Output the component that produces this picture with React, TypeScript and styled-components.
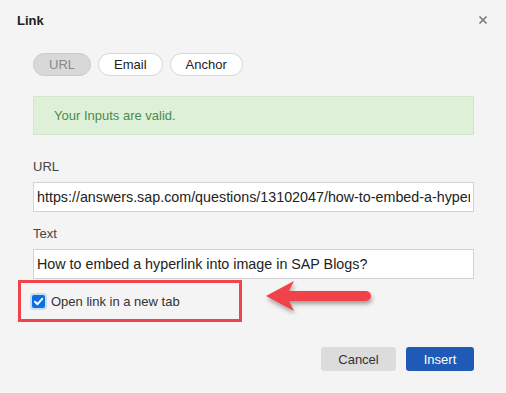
import styled, { createGlobalStyle } from 'styled-components';

const GlobalStyle = createGlobalStyle`
    body {
        margin: 0;
        background: #f4f4f4;
        font-family: "Liberation Sans", Arial, sans-serif;
    }
`

const tabs = ["URL", "Email", "Anchor"];

const LinkDialog = () => {
    return (
        <StyledDialog>
            <GlobalStyle />
            <Header>
                <Title>Link</Title>
                <Close width="10" height="10" viewBox="0 0 10 10">
                    <path d="M1.5 1.5 L8.5 8.5 M8.5 1.5 L1.5 8.5" stroke="#777" strokeWidth="1.6" />
                </Close>
            </Header>
            <Body>
                <Tabs>
                    {tabs.map((tab, i) => (
                        <Tab key={tab} $active={i === 0}>{tab}</Tab>
                    ))}
                </Tabs>
                <Alert>Your Inputs are valid.</Alert>
                <Label>URL</Label>
                <Field value="https://answers.sap.com/questions/13102047/how-to-embed-a-hyperlink-into-image-in-sap-blogs.html" readOnly />
                <Label $second>Text</Label>
                <Field value="How to embed a hyperlink into image in SAP Blogs?" readOnly />
                <CheckRow>
                    <Highlight>
                        <CheckBox>
                            <svg width="13" height="13" viewBox="0 0 13 13">
                                <path d="M3 6.8 L5.5 9.2 L10.2 3.8" fill="none" stroke="#fff" strokeWidth="2" strokeLinecap="round" strokeLinejoin="round" />
                            </svg>
                        </CheckBox>
                        <CheckLabel>Open link in a new tab</CheckLabel>
                    </Highlight>
                    <Arrow width="112" height="36" viewBox="0 0 112 36">
                        <defs>
                            <filter id="shadow" x="-10%" y="-30%" width="130%" height="170%">
                                <feDropShadow dx="1" dy="3" stdDeviation="2" floodColor="#000" floodOpacity="0.35" />
                            </filter>
                        </defs>
                        <path
                            d="M2 17 L30 2 L25 12 L102 12 A5 5 0 0 1 102 22 L25 22 L30 32 Z"
                            fill="#f2424a"
                            filter="url(#shadow)"
                        />
                    </Arrow>
                </CheckRow>
                <Footer>
                    <Button>Cancel</Button>
                    <Button $primary>Insert</Button>
                </Footer>
            </Body>
        </StyledDialog>
    );
};

const StyledDialog = styled.div`
    width: 506px;
    height: 393px;
    box-sizing: border-box;
    background: #f4f4f4;
    color: #333;
`
const Header = styled.div`
    display: flex;
    align-items: center;
    justify-content: space-between;
    height: 40px;
    padding: 0 17px 0 17px;
`
const Title = styled.div`
    font-size: 13px;
    font-weight: bold;
    color: #222;
`
const Close = styled.svg`
    margin-right: 1px;
`
const Body = styled.div`
    padding: 13px 32px 0 33px;
`
const Tabs = styled.div`
    display: flex;
    gap: 7px;
`
const Tab = styled.div<{ $active?: boolean }>`
    height: 23px;
    box-sizing: border-box;
    padding: 0 15px;
    display: flex;
    align-items: center;
    border-radius: 12px;
    font-size: 13px;
    border: 1px solid ${p => p.$active ? '#c9c9c9' : '#d6d6d6'};
    background: ${p => p.$active ? '#d8d8d8' : '#fff'};
    color: ${p => p.$active ? '#8a8a8a' : '#222'};
`
const Alert = styled.div`
    margin-top: 20px;
    height: 39px;
    box-sizing: border-box;
    padding: 0 20px;
    display: flex;
    align-items: center;
    background: #dff0d8;
    border: 1px solid #d0e8c6;
    color: #4b8b4b;
    font-size: 13px;
`
const Label = styled.div<{ $second?: boolean }>`
    font-size: 13px;
    color: #444;
    margin: ${p => p.$second ? 14 : 24}px 0 8px;
    line-height: 15px;
`
const Field = styled.input`
    display: block;
    width: 100%;
    height: 30px;
    box-sizing: border-box;
    border: 1px solid #d3d3d3;
    background: #fff;
    padding: 0 3px;
    font-family: "Liberation Sans", Arial, sans-serif;
    font-size: 14.3px;
    color: #222;
    outline: none;
`
const CheckRow = styled.div`
    position: relative;
    margin: 1px 0 0 -15px;
`
const Highlight = styled.div`
    width: 224px;
    height: 42px;
    box-sizing: border-box;
    border: 3px solid #f2424a;
    display: flex;
    align-items: center;
    padding-left: 11px;
    gap: 4px;
`
const CheckBox = styled.span`
    width: 13px;
    height: 13px;
    border-radius: 2px;
    background: #0b6fe0;
    display: flex;
    box-shadow: 0 0 0 2px #c6dcf6;
`
const CheckLabel = styled.span`
    font-size: 13px;
    color: #333;
    margin-left: 2px;
`
const Arrow = styled.svg`
    position: absolute;
    left: 246px;
    top: -1px;
`
const Footer = styled.div`
    display: flex;
    justify-content: flex-end;
    gap: 10px;
    margin-top: 25px;
`
const Button = styled.div<{ $primary?: boolean }>`
    height: 24px;
    box-sizing: border-box;
    display: flex;
    align-items: center;
    justify-content: center;
    width: ${p => p.$primary ? 68 : 75}px;
    border-radius: 3px;
    font-size: 13px;
    background: ${p => p.$primary ? '#1f5bb6' : '#dcdcdc'};
    color: ${p => p.$primary ? '#fff' : '#333'};
`

export default LinkDialog;
